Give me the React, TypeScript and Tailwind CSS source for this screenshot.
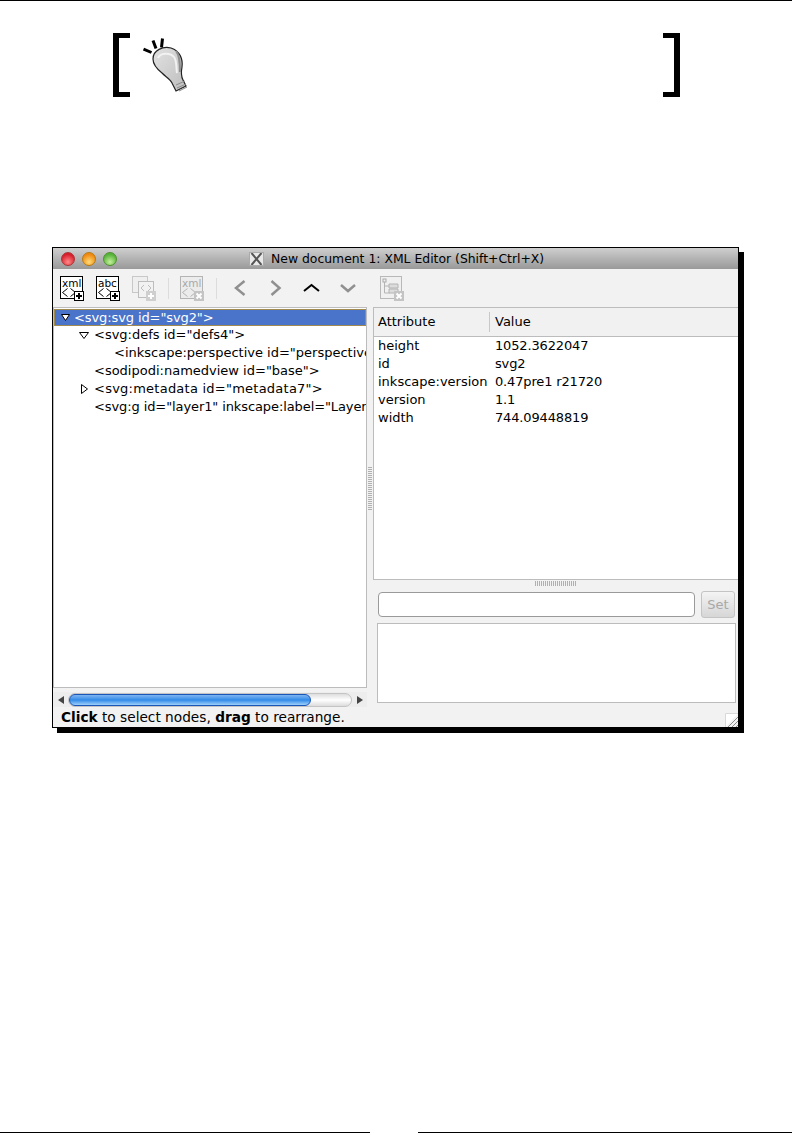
function TagIcon({ label, disabled, badge }: { label: string; disabled?: boolean; badge: 'plus' | 'x' }) {
  const c = disabled ? '#b4b4b4' : '#000';
  return (
    <svg width="25" height="25" viewBox="0 0 25 25" className="block shrink-0">
      <rect x="0.5" y="0.5" width="22" height="22" fill={disabled ? '#ececec' : '#fff'} stroke={c} />
      <text x="2" y="11" fontSize="10.5" fontFamily="DejaVu Sans, sans-serif" fill={disabled ? '#a8a8a8' : '#000'}>{label}</text>
      <path d="M7.5 12.5l-5 4 5 4M10.5 12.5l5 4-5 4" fill="none" stroke={c} strokeWidth="1" />
      {badge === 'plus' ? (
        <g>
          <rect x="14.5" y="15.5" width="9" height="9" fill="#fff" stroke="#000" />
          <path d="M19 17v6M16 20h6" stroke="#000" strokeWidth="2" />
        </g>
      ) : (
        <g>
          <rect x="14" y="15" width="10" height="10" fill="#c4c4c4" />
          <path d="M16.5 17.5l5 5M21.5 17.5l-5 5" stroke="#fff" strokeWidth="2" />
        </g>
      )}
    </svg>
  );
}

function DuplicateIcon() {
  return (
    <svg width="25" height="25" viewBox="0 0 25 25" className="block shrink-0">
      <rect x="0.5" y="0.5" width="15" height="16" fill="#efefef" stroke="#c8c8c8" />
      <rect x="6.5" y="5.5" width="15" height="16" fill="#f2f2f2" stroke="#bdbdbd" />
      <path d="M12 9l-3 3 3 3M16 9l3 3-3 3" fill="none" stroke="#bdbdbd" />
      <rect x="14" y="15" width="10" height="10" fill="#cfcfcf" />
      <path d="M19 17v6M16 20h6" stroke="#fff" strokeWidth="2" />
    </svg>
  );
}

function TreeIcon() {
  return (
    <svg width="25" height="25" viewBox="0 0 25 25" className="block shrink-0">
      <rect x="0.5" y="0.5" width="21" height="22" fill="#f0f0f0" stroke="#b8b8b8" />
      <rect x="3" y="3" width="3" height="3" fill="none" stroke="#aaa" />
      <path d="M4.5 6v11h5M4.5 10h5" fill="none" stroke="#b4b4b4" />
      <path d="M9 8h9v4H9zM9 13h9v4H9z" fill="#dcdcdc" stroke="#b4b4b4" />
      <rect x="14" y="15" width="10" height="10" fill="#c4c4c4" />
      <path d="M16.5 17.5l5 5M21.5 17.5l-5 5" stroke="#fff" strokeWidth="2" />
    </svg>
  );
}

function Chevron({ d, dark }: { d: string; dark?: boolean }) {
  return (
    <svg width="36" height="16" viewBox="0 0 36 16" className="block shrink-0">
      <path d={d} fill="none" stroke={dark ? '#000' : '#909090'} strokeWidth={dark ? 2 : 2.5} />
    </svg>
  );
}

function Bulb() {
  return (
    <svg width="47" height="57" viewBox="0 0 47 57" className="block shrink-0">
      <defs>
        <linearGradient id="bulb" x1="0" y1="0" x2="1" y2="1">
          <stop offset="0" stopColor="#e2e2e2" />
          <stop offset="1" stopColor="#bdbdbd" />
        </linearGradient>
      </defs>
      <path d="M0.5 11l8 3.5M10 2.5l3 8M19.5 0.5l-1 9" stroke="#000" strokeWidth="3" fill="none" />
      <path d="M10 21c0-9 10-13 18-11 9 3 12 11 11 19-1 5-1 9 1 13l3 6-10 5-4-8c-2-4-6-6-10-10-5-4-9-8-9-14z" fill="url(#bulb)" stroke="#222" strokeWidth="1.2" />
      <path d="M15 20c2-5 12-6 16-1 3 4 2 10 3 16" fill="none" stroke="#f2f2f2" strokeWidth="2" />
      <path d="M33 13c4 5 4 13 4 21" fill="none" stroke="#8f8f8f" strokeWidth="2" />
      <path d="M33 47l9-4M34 50l9-4M36 53l8-4" stroke="#8a8a8a" strokeWidth="1" />
    </svg>
  );
}

function Sep() {
  return <div className="w-px h-[21px] bg-[#dcdcdc] shrink-0" />;
}

const attrs = [
  ['height', '1052.3622047'],
  ['id', 'svg2'],
  ['inkscape:version', '0.47pre1 r21720'],
  ['version', '1.1'],
  ['width', '744.09448819'],
];

export default function App() {
  return (
    <div className="w-[792px] h-[1142px] bg-white flex flex-col overflow-hidden font-['DejaVu_Sans',sans-serif] text-[13px] leading-[18px] text-black">
      <div className="h-px bg-black shrink-0" />

      {/* tip box */}
      <div className="h-[64px] mt-[32px] ml-[113px] w-[567px] flex items-start justify-between shrink-0">
        <div className="flex items-start">
          <div className="w-[17px] h-[64px] border-l-[6px] border-y-[5px] border-black" />
          <div className="ml-[13px] mt-[5px]"><Bulb /></div>
        </div>
        <div className="w-[17px] h-[64px] border-r-[6px] border-y-[5px] border-black" />
      </div>

      {/* window */}
      <div className="ml-[52px] mt-[150px] w-[687px] h-[481px] border border-black shadow-[5px_5px_0_#000] bg-[#f2f2f2] flex flex-col shrink-0">
        <div className="h-[21px] bg-gradient-to-b from-[#cfcfcf] to-[#999999] flex items-center shrink-0">
          <div className="flex gap-[7px] ml-[8px]">
            <div className="w-[14px] h-[14px] rounded-full border border-[#a33] bg-[radial-gradient(circle_at_50%_75%,#ff8a8a,#d81e2c_70%)]" />
            <div className="w-[14px] h-[14px] rounded-full border border-[#b97a10] bg-[radial-gradient(circle_at_50%_75%,#ffdc7a,#f08a10_70%)]" />
            <div className="w-[14px] h-[14px] rounded-full border border-[#4f8f2f] bg-[radial-gradient(circle_at_50%_75%,#c4f09a,#56b33a_70%)]" />
          </div>
          <div className="ml-[132px] w-[15px] h-[14px] bg-[#e8e8e8] border border-[#aaaaaa] flex items-center justify-center">
            <svg width="13" height="12" viewBox="0 0 13 12"><path d="M1.5 0l10 12M11.5 0l-10 12" stroke="#555" strokeWidth="2" /></svg>
          </div>
          <span className="ml-[7px] whitespace-nowrap text-[12.4px]">New document 1: XML Editor (Shift+Ctrl+X)</span>
        </div>

        <div className="h-[38px] flex items-center pl-[7px] shrink-0">
          <TagIcon label="xml" badge="plus" />
          <div className="ml-[11px]"><TagIcon label="abc" badge="plus" /></div>
          <div className="ml-[11px]"><DuplicateIcon /></div>
          <div className="ml-[11px]"><Sep /></div>
          <div className="ml-[11px]"><TagIcon label="xml" disabled badge="x" /></div>
          <div className="ml-[11px]"><Sep /></div>
          <div className="ml-[5px] flex">
            <Chevron d="M22.5 1L14 8l8.5 7" />
            <Chevron d="M13.5 1l8 7-8 7" />
            <Chevron d="M10 11l7.5-6 7.5 6" dark />
            <Chevron d="M11 5l7 6 7-6" />
          </div>
          <div className="ml-[14px]"><TreeIcon /></div>
        </div>

        <div className="flex flex-1 min-h-0">
          {/* node tree */}
          <div className="w-[314px] flex flex-col shrink-0">
            <div className="h-[381px] bg-white border border-[#bcbcbc] overflow-hidden shrink-0">
              <div className="h-[17px] mt-px bg-[#4a74c9] outline outline-1 outline-[#a08a50] -outline-offset-1 flex items-center text-white pl-[20px] relative whitespace-nowrap tracking-[-0.1px]">
                <svg width="9" height="7" viewBox="0 0 9 7" className="absolute left-[7px] top-[5px]"><path d="M0.5 0.5h8L4.5 6.5z" fill="#fff" stroke="#000" /></svg>
                {'<svg:svg id="svg2">'}
              </div>
              <div className="h-[18px] pl-[40px] relative whitespace-nowrap">
                <svg width="10" height="7" viewBox="0 0 10 7" className="absolute left-[25px] top-[6px]"><path d="M0.5 0.5h9L5 6.5z" fill="#fff" stroke="#000" /></svg>
                {'<svg:defs id="defs4">'}
              </div>
              <div className="h-[18px] pl-[60px] whitespace-nowrap">{'<inkscape:perspective id="perspective10">'}</div>
              <div className="h-[18px] pl-[40px] whitespace-nowrap">{'<sodipodi:namedview id="base">'}</div>
              <div className="h-[18px] pl-[40px] relative whitespace-nowrap tracking-[0.24px]">
                <svg width="7" height="10" viewBox="0 0 7 10" className="absolute left-[27px] top-[4px]"><path d="M0.5 0.5v9L6.5 5z" fill="#fff" stroke="#000" /></svg>
                {'<svg:metadata id="metadata7">'}
              </div>
              <div className="h-[18px] pl-[40px] whitespace-nowrap tracking-[-0.1px]">{'<svg:g id="layer1" inkscape:label="Layer 1">'}</div>
            </div>
            {/* scrollbar */}
            <div className="h-[15px] mt-[4px] flex items-center bg-[#ededed] shrink-0">
              <div className="w-[15px] flex justify-center"><div className="border-y-[4px] border-y-transparent border-r-[6px] border-r-[#444]" /></div>
              <div className="flex-1 h-[14px] rounded-full bg-gradient-to-b from-[#dedede] via-[#ffffff] to-[#dcdcdc] border border-[#c4c4c4]">
                <div className="w-[242px] h-full rounded-full border border-[#1a55b8] bg-gradient-to-b from-[#7cb4f0] via-[#2f8ae8] to-[#9cd0fa]" />
              </div>
              <div className="w-[15px] flex justify-center"><div className="border-y-[4px] border-y-transparent border-l-[6px] border-l-[#444]" /></div>
            </div>
          </div>

          {/* pane handle */}
          <div className="w-[6px] flex justify-center shrink-0">
            <div className="w-[4px] h-[43px] mt-[160px] bg-[repeating-linear-gradient(0deg,#b0b0b0_0,#b0b0b0_1px,#f2f2f2_1px,#f2f2f2_2px)]" />
          </div>

          {/* attributes */}
          <div className="flex-1 min-w-0 flex flex-col">
            <div className="h-[273px] bg-white border border-[#bcbcbc] border-r-0 shrink-0">
              <div className="h-[29px] bg-[#f1f1f1] border-b border-[#bcbcbc] flex items-center">
                <div className="w-[116px] pl-[4px] border-r border-[#c8c8c8] h-[20px] flex items-center">Attribute</div>
                <div className="pl-[5px]">Value</div>
              </div>
              {attrs.map(([name, value]) => (
                <div key={name} className="h-[18px] flex">
                  <div className="w-[121px] pl-[4px] whitespace-nowrap shrink-0">{name}</div>
                  <div className="tracking-[-0.15px]">{value}</div>
                </div>
              ))}
            </div>
            <div className="h-[7px] flex justify-center items-center shrink-0">
              <div className="w-[42px] h-[5px] bg-[repeating-linear-gradient(90deg,#b0b0b0_0,#b0b0b0_1px,#f2f2f2_1px,#f2f2f2_2px)]" />
            </div>
            <div className="flex items-center mt-[4px] ml-[5px] shrink-0">
              <div className="w-[317px] h-[25px] bg-white border border-[#9a9a9a] rounded-[4px]" />
              <div className="ml-[6px] w-[34px] h-[27px] rounded-[3px] border border-[#c4c4c4] bg-gradient-to-b from-[#f4f4f4] to-[#d6d6d6] flex items-center justify-center text-[#a8a8a8]">Set</div>
            </div>
            <div className="ml-[4px] mt-[5px] w-[359px] h-[80px] bg-white border border-[#bcbcbc] shrink-0" />
          </div>
        </div>

        {/* status */}
        <div className="h-[20px] flex items-center pl-[8px] relative shrink-0">
          <span className="text-[13.7px]"><b>Click</b> to select nodes, <b>drag</b> to rearrange.</span>
          <svg width="13" height="14" viewBox="0 0 13 14" className="absolute right-0 bottom-0">
            <path d="M0.5 14V0.5H13" fill="#fff" stroke="#d8d8d8" />
            <path d="M3 14L13 4M7 14l6-6M11 14l2-2" stroke="#8a8a8a" />
          </svg>
        </div>
      </div>

      {/* page footer rules */}
      <div className="mt-[404px] flex justify-between shrink-0">
        <div className="w-[370px] h-px bg-black" />
        <div className="w-[374px] h-px bg-black" />
      </div>
    </div>
  );
}
